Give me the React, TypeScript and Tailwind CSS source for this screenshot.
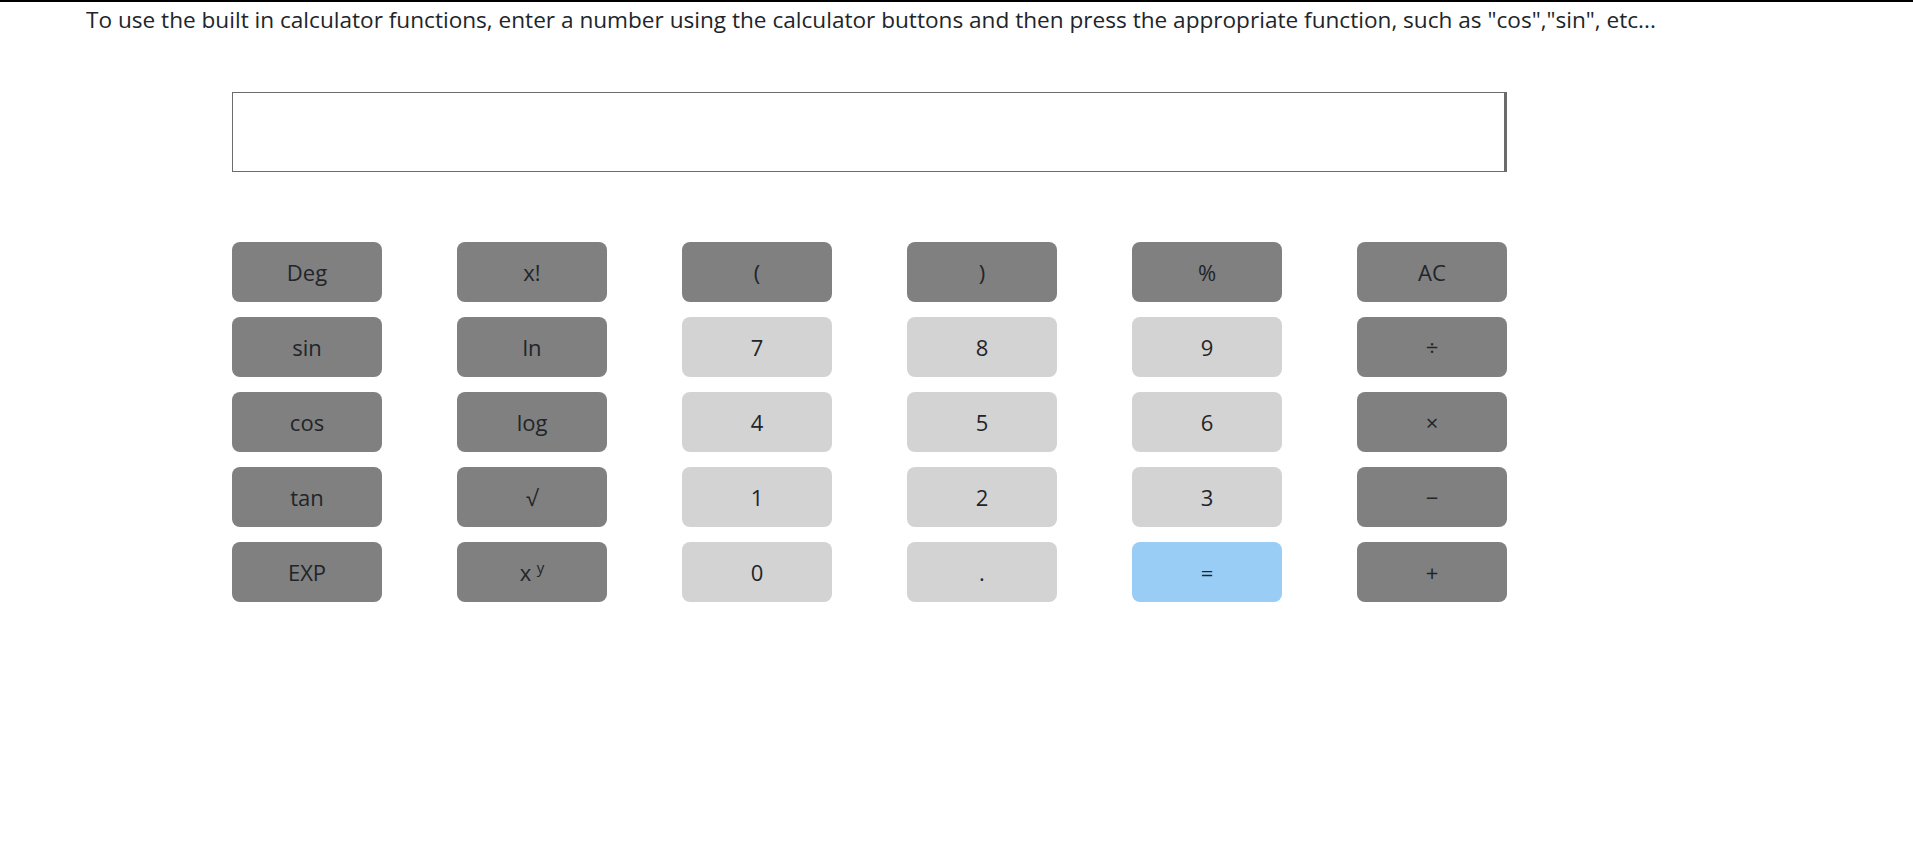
const rows: { label: React.ReactNode; tone: "dark" | "light" | "blue" }[][] = [
  [
    { label: "Deg", tone: "dark" },
    { label: "x!", tone: "dark" },
    { label: "(", tone: "dark" },
    { label: ")", tone: "dark" },
    { label: "%", tone: "dark" },
    { label: "AC", tone: "dark" },
  ],
  [
    { label: "sin", tone: "dark" },
    { label: "ln", tone: "dark" },
    { label: "7", tone: "light" },
    { label: "8", tone: "light" },
    { label: "9", tone: "light" },
    { label: "÷", tone: "dark" },
  ],
  [
    { label: "cos", tone: "dark" },
    { label: "log", tone: "dark" },
    { label: "4", tone: "light" },
    { label: "5", tone: "light" },
    { label: "6", tone: "light" },
    { label: "×", tone: "dark" },
  ],
  [
    { label: "tan", tone: "dark" },
    { label: "√", tone: "dark" },
    { label: "1", tone: "light" },
    { label: "2", tone: "light" },
    { label: "3", tone: "light" },
    { label: "−", tone: "dark" },
  ],
  [
    { label: "EXP", tone: "dark" },
    {
      label: (
        <span>
          x <sup className="text-[15px]">y</sup>
        </span>
      ),
      tone: "dark",
    },
    { label: "0", tone: "light" },
    { label: ".", tone: "light" },
    { label: "=", tone: "blue" },
    { label: "+", tone: "dark" },
  ],
];

const toneClass = {
  dark: "bg-[#808080]",
  light: "bg-[#d3d3d3]",
  blue: "bg-[#99cdf6]",
};

export default function App() {
  return (
    <div
      className="min-h-[847px] border-t-2 border-black bg-white text-[#212529]"
      style={{ fontFamily: '"Open Sans", "Noto Sans", sans-serif' }}
    >
      <p className="pl-[86px] pt-[3px] text-[22.6px] leading-[30px]">
        To use the built in calculator functions, enter a number using the calculator buttons and then press the
        appropriate function, such as "cos","sin", etc...
      </p>

      <div className="ml-[232px] mt-[57px] w-[1275px]">
        <div className="h-[80px] w-full border border-r-[3px] border-[#6b6b6b] bg-white" />

        <div className="mt-[70px] flex flex-col gap-[15px]">
          {rows.map((row, i) => (
            <div key={i} className="flex gap-[75px]">
              {row.map((b, j) => (
                <button
                  key={j}
                  className={`flex h-[60px] w-[150px] items-center justify-center rounded-lg text-[22px] ${toneClass[b.tone]}`}
                >
                  {b.label}
                </button>
              ))}
            </div>
          ))}
        </div>
      </div>
    </div>
  );
}
